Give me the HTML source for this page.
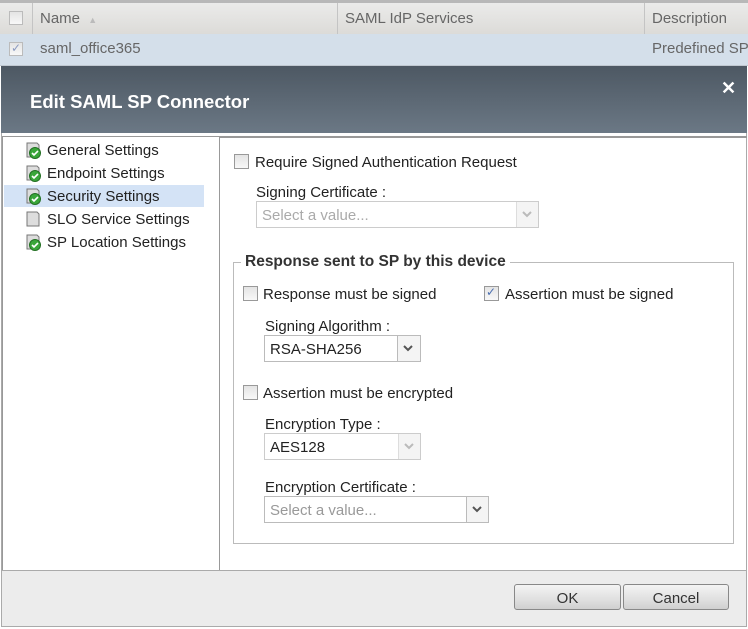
<html><head><style>
body{margin:0;width:748px;height:629px;position:relative;overflow:hidden;background:#fff;font-family:"Liberation Sans",Arial,sans-serif;font-size:15px;color:#222}
.a{position:absolute;white-space:nowrap}
.cb{position:absolute;width:13px;height:13px;border:1px solid #999;background:linear-gradient(#e4e4e4,#f8f8f8);box-sizing:border-box}
.sel{position:absolute;height:27px;border:1px solid #bbb;box-sizing:border-box;background:#fff}
.sel .ar{position:absolute;right:0;top:0;bottom:0;width:21px;border-left:1px solid #bbb;background:#f4f4f4}
.sel .ar svg{position:absolute;left:5px;top:9px}
.sel span{position:absolute;left:5px;top:5px}
.chk{position:absolute;font-size:12px;color:#4b6fb0;left:1px;top:-2px}
.btn{position:absolute;height:26px;border:1px solid #888;border-radius:3px;background:linear-gradient(#f4f4f4,#e0e0e0 60%,#cfcfcf);text-align:center;line-height:27px;font-size:15px;color:#333;box-sizing:border-box}
</style></head><body>
<div class="a" style="left:0;top:0;width:748px;height:3px;background:#b8b8b8"></div>
<div class="a" style="left:0;top:3px;width:748px;height:31px;background:linear-gradient(#ebebea,#dcdbd8);border-bottom:1px solid #c8c8c8"></div>
<div class="a" style="left:32px;top:3px;width:1px;height:31px;background:#c4c4c4"></div>
<div class="a" style="left:337px;top:3px;width:1px;height:31px;background:#c4c4c4"></div>
<div class="a" style="left:644px;top:3px;width:1px;height:31px;background:#c4c4c4"></div>
<div class="cb" style="left:9px;top:11px;width:14px;height:14px;border-color:#bbb"></div>
<div class="a" style="left:40px;top:10px;color:#666">Name <span style="color:#bbb;font-size:9px;margin-left:4px">▲</span></div>
<div class="a" style="left:345px;top:10px;color:#666">SAML IdP Services</div>
<div class="a" style="left:652px;top:10px;color:#666">Description</div>
<div class="a" style="left:0;top:34px;width:748px;height:31px;background:#d4dfea;border-bottom:1px solid #c0c8d0"></div>
<div class="cb" style="left:9px;top:42px;width:14px;height:14px;border-color:#bbb"><span class="chk" style="color:#8a9ac0">✓</span></div>
<div class="a" style="left:40px;top:40px;color:#666">saml_office365</div>
<div class="a" style="left:652px;top:40px;color:#666">Predefined SP</div>
<div class="a" style="left:1px;top:66px;width:746px;height:67px;background:linear-gradient(#4d5863,#6b7885)"></div>
<div class="a" style="left:30px;top:91px;color:#fff;font-weight:bold;font-size:18.5px">Edit SAML SP Connector</div>
<div class="a" style="left:721px;top:78px;color:#fff;font-weight:bold;font-size:18px">✕</div>
<div class="a" style="left:1px;top:133px;width:746px;height:437px;background:#fff;border-left:1px solid #aaa;border-right:1px solid #aaa;box-sizing:border-box"></div>
<div class="a" style="left:2px;top:136px;width:218px;height:434px;border:1px solid #999;border-bottom:none;box-sizing:border-box"></div>
<div class="a" style="left:4px;top:185px;width:200px;height:22px;background:#d4e3f6"></div>
<div class="a" style="left:47px;top:139px;line-height:23px">General Settings<br>Endpoint Settings<br>Security Settings<br>SLO Service Settings<br>SP Location Settings</div>
<svg class="a" style="left:23px;top:140px" width="22" height="115">
<g id="i"><path d="M4 3h10l2 2v12H4z" fill="#ddd" stroke="#777"/><circle cx="12" cy="13" r="5.5" fill="#3aa63a" stroke="#237023"/><path d="M9 13l2 2 4-4" stroke="#fff" stroke-width="1.6" fill="none"/></g>
<use href="#i" y="23"/><use href="#i" y="46"/>
<path d="M4 72h10l2 2v12H4z" fill="#ddd" stroke="#777"/>
<use href="#i" y="92"/>
</svg>
<div class="a" style="left:220px;top:136px;width:527px;height:2px;background:#999"></div>
<div class="cb" style="left:234px;top:154px;width:15px;height:15px"></div>
<div class="a" style="left:255px;top:154px">Require Signed Authentication Request</div>
<div class="a" style="left:256px;top:184px">Signing Certificate :</div>
<div class="sel" style="left:256px;top:201px;width:283px;border-color:#ccc"><span style="color:#aaa">Select a value...</span><div class="ar" style="border-color:#ddd"><svg width="10" height="7"><path d="M1 1l4 4 4-4" stroke="#bbb" stroke-width="2" fill="none"/></svg></div></div>
<div class="a" style="left:233px;top:262px;width:501px;height:282px;border:1px solid #bbb;box-sizing:border-box"></div>
<div class="a" style="left:241px;top:253px;background:#fff;padding:0 4px;font-weight:bold;font-size:15.5px;color:#333">Response sent to SP by this device</div>
<div class="cb" style="left:243px;top:286px;width:15px;height:15px"></div>
<div class="a" style="left:263px;top:286px">Response must be signed</div>
<div class="cb" style="left:484px;top:286px;width:15px;height:15px"><span class="chk">✓</span></div>
<div class="a" style="left:505px;top:286px">Assertion must be signed</div>
<div class="a" style="left:265px;top:318px">Signing Algorithm :</div>
<div class="sel" style="left:264px;top:335px;width:157px"><span>RSA-SHA256</span><div class="ar" style="width:22px"><svg width="10" height="7"><path d="M1 1l4 4 4-4" stroke="#555" stroke-width="2" fill="none"/></svg></div></div>
<div class="cb" style="left:243px;top:385px;width:15px;height:15px"></div>
<div class="a" style="left:263px;top:385px">Assertion must be encrypted</div>
<div class="a" style="left:265px;top:416px">Encryption Type :</div>
<div class="sel" style="left:264px;top:433px;width:157px;border-color:#ccc"><span>AES128</span><div class="ar" style="border-color:#ddd"><svg width="10" height="7"><path d="M1 1l4 4 4-4" stroke="#bbb" stroke-width="2" fill="none"/></svg></div></div>
<div class="a" style="left:265px;top:479px">Encryption Certificate :</div>
<div class="sel" style="left:264px;top:496px;width:225px"><span style="color:#999">Select a value...</span><div class="ar"><svg width="10" height="7"><path d="M1 1l4 4 4-4" stroke="#555" stroke-width="2" fill="none"/></svg></div></div>
<div class="a" style="left:1px;top:570px;width:746px;height:57px;background:#ececec;border:1px solid #aaa;box-sizing:border-box"></div>
<div class="btn" style="left:514px;top:584px;width:107px">OK</div>
<div class="btn" style="left:623px;top:584px;width:106px">Cancel</div>
</body></html>
